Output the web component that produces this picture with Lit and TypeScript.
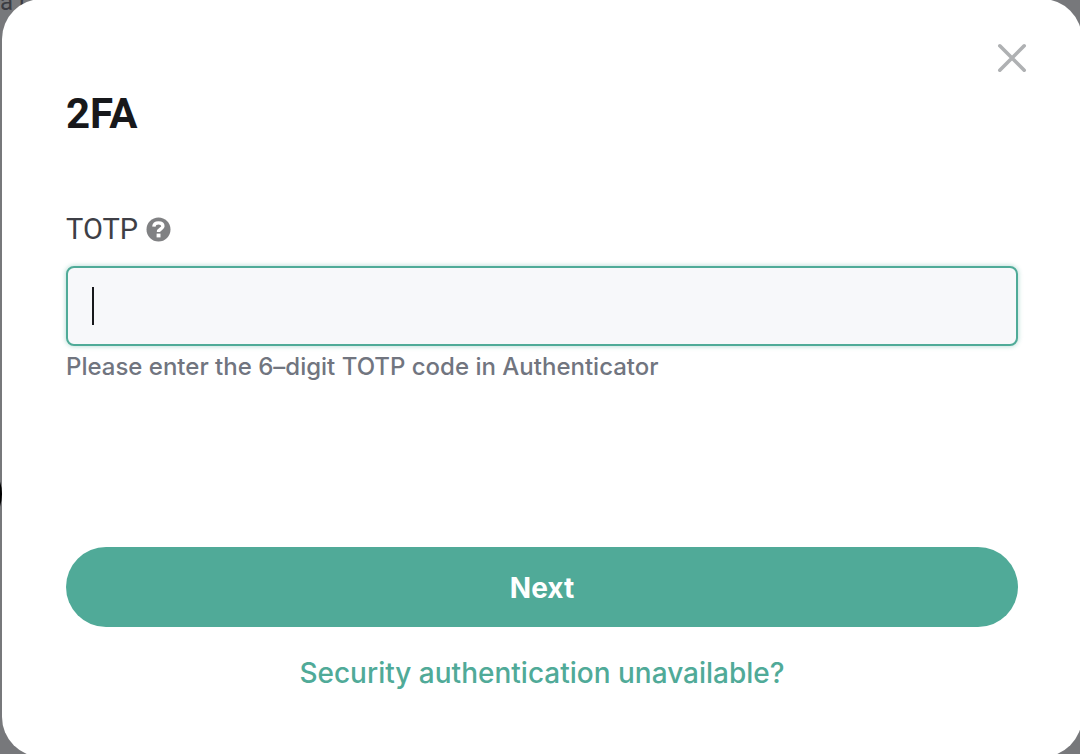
import { LitElement, html, css } from "lit";
import { customElement } from "lit/decorators.js";

@customElement("app-root")
export class AppRoot extends LitElement {
  static styles = css`
    :host {
      display: grid;
      position: relative;
      min-height: 100vh;
      overflow: hidden;
      background: #77787b;
      font-family: Roboto, "Liberation Sans", sans-serif;
    }
    * {
      box-sizing: border-box;
    }
    .backdrop {
      position: absolute;
      inset: 0;
      color: #3b3c42;
      font-size: 24px;
      line-height: 28px;
    }
    .word {
      position: absolute;
      left: 0;
      top: -12px;
    }
    .blot {
      position: absolute;
      left: -78px;
      top: 454px;
      width: 80px;
      height: 80px;
      border-radius: 50%;
      background: #000;
    }
    .dialog {
      position: relative;
      display: flex;
      flex-direction: column;
      margin: -1px -2px -3px 2px;
      padding: 87px 64px 64px;
      border-radius: 40px;
      background: #fff;
    }
    .close {
      position: absolute;
      top: 40px;
      right: 50px;
      display: flex;
      padding: 4px 5px;
      border: 0;
      background: none;
      cursor: pointer;
    }
    h1 {
      margin: 0;
      color: #17181b;
      font-size: 42px;
      line-height: 56px;
      font-weight: 700;
    }
    .field {
      display: flex;
      flex-direction: column;
      margin-top: 68px;
    }
    .label {
      display: flex;
      align-items: center;
      gap: 8px;
      margin-bottom: 18px;
      color: #3e3f46;
      font-size: 29px;
      line-height: 38px;
    }
    .box {
      position: relative;
      display: flex;
    }
    input {
      flex: 1;
      min-width: 0;
      height: 80px;
      padding: 0 24px;
      border: 2px solid #4fab98;
      border-radius: 8px;
      outline: 0;
      background: #f7f8fa;
      box-shadow: 0 0 4px 1px #4fab9855;
      color: #17181b;
      font: inherit;
      font-size: 28px;
    }
    .caret {
      position: absolute;
      left: 26px;
      top: 21px;
      width: 2px;
      height: 38px;
      background: #17181b;
    }
    .hint {
      margin: 4px 0 0;
      color: #71757f;
      font-family: Inter, sans-serif;
      font-size: 24px;
      font-weight: 500;
      line-height: 34px;
    }
    .next {
      height: 80px;
      margin-top: auto;
      padding: 2px 0 0;
      border: 0;
      border-radius: 40px;
      background: #50aa98;
      color: #fff;
      font-family: Inter, sans-serif;
      font-size: 28px;
      font-weight: 700;
      cursor: pointer;
    }
    .help {
      align-self: center;
      margin-top: 26px;
      color: #50aa98;
      font-family: Inter, sans-serif;
      font-size: 28px;
      font-weight: 500;
      line-height: 40px;
      text-decoration: none;
    }
  `;

  render() {
    return html`
      <div class="backdrop" aria-hidden="true">
        <span class="word">a r</span>
        <span class="blot"></span>
      </div>
      <main class="dialog" role="dialog" aria-labelledby="title">
        <button class="close" aria-label="Close">
          <svg width="30" height="30" viewBox="0 0 30 30" fill="none" stroke="#afb1b3" stroke-width="3.6" stroke-linecap="round">
            <path d="M2.8 2.8 27.2 27.2M27.2 2.8 2.8 27.2" />
          </svg>
        </button>
        <h1 id="title">2FA</h1>
        <div class="field">
          <div class="label">
            <label for="code">TOTP</label>
            <svg width="25" height="25" viewBox="0 0 25 25" fill="none" aria-hidden="true">
              <circle cx="12.5" cy="12.5" r="12" fill="#808183" />
              <path d="M7.8 9.6C8.1 6.9 10 5.9 12.5 5.9c2.6 0 4.4 1.2 4.4 3.3 0 2.9-4.4 2.7-4.4 5.7" stroke="#fff" stroke-width="3.4" />
              <path d="M10.6 16.6h3.9v3.8h-3.9z" fill="#fff" />
            </svg>
          </div>
          <div class="box">
            <input id="code" inputmode="numeric" maxlength="6" autocomplete="one-time-code" aria-describedby="hint" />
            <span class="caret" aria-hidden="true"></span>
          </div>
          <p class="hint" id="hint">Please enter the 6–digit TOTP code in Authenticator</p>
        </div>
        <button class="next">Next</button>
        <a class="help" href="#">Security authentication unavailable?</a>
      </main>
    `;
  }
}
